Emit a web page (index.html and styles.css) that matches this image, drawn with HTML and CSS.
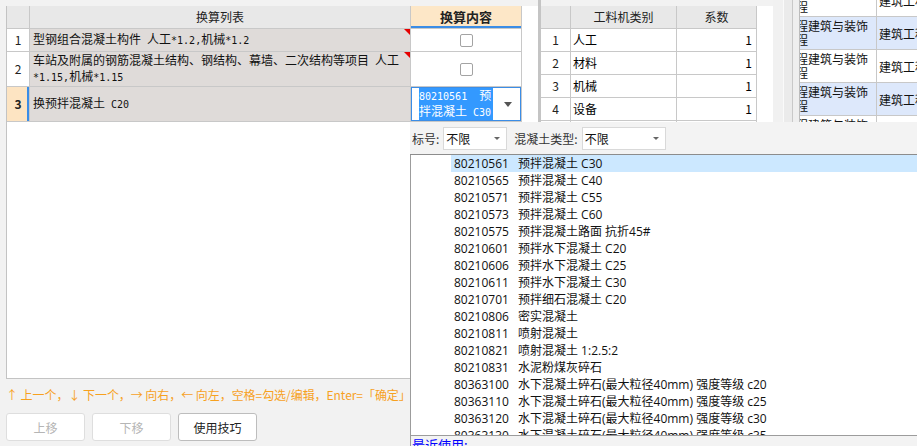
FILE: index.html
```html
<!DOCTYPE html>
<html lang="zh">
<head>
<meta charset="utf-8">
<title>换算</title>
<link rel="stylesheet" href="styles.css">
</head>
<body>
<div class="app">
  <div class="left">
    <div class="panel">
      <div class="grid">
        <div class="cell hd"></div>
        <div class="cell hd">换算列表</div>
        <div class="cell hd hd-act">换算内容</div>

        <div class="cell num">1</div>
        <div class="cell txt"><span>型钢组合混凝土构件<span class="m"> </span>人工<span class="m">*1.2,</span>机械<span class="m">*1.2</span></span><span class="flag"></span></div>
        <div class="cell ctr"><span class="cb"></span></div>

        <div class="cell num">2</div>
        <div class="cell txt"><span>车站及附属的钢筋混凝土结构、钢结构、幕墙、二次结构等项目<span class="m"> </span>人工<br><span class="m">*1.15,</span>机械<span class="m">*1.15</span></span><span class="flag"></span></div>
        <div class="cell ctr"><span class="cb"></span></div>

        <div class="cell num num-act">3</div>
        <div class="cell txt"><span>换预拌混凝土<span class="m"> C20</span></span></div>
        <div class="cell editor"><span class="sel"><span class="m">80210561  </span>预<br>拌混凝土<span class="m"> C30</span></span><span class="caret"></span></div>
      </div>
    </div>
    <div class="hint">↑ 上一个，↓ 下一个，→ 向右，← 向左，空格=勾选/编辑，Enter=「确定」</div>
    <div class="buttons">
      <button class="btn off">上移</button>
      <button class="btn off">下移</button>
      <button class="btn">使用技巧</button>
    </div>
  </div>
  <div class="splitter"></div>
  <div class="mid">
    <div class="panel2">
      <div class="grid2">
        <div class="cell hd"></div>
        <div class="cell hd">工料机类别</div>
        <div class="cell hd">系数</div>
        <div class="cell num">1</div><div class="cell t2">人工</div><div class="cell val">1</div>
        <div class="cell num">2</div><div class="cell t2">材料</div><div class="cell val">1</div>
        <div class="cell num">3</div><div class="cell t2">机械</div><div class="cell val">1</div>
        <div class="cell num">4</div><div class="cell t2">设备</div><div class="cell val">1</div>
        <div class="cell num">5</div><div class="cell t2"></div><div class="cell val"></div>
      </div>
    </div>
  </div>
  <div class="gutter"></div>
  <div class="right">
    <div class="grid3">
      <div class="c3"><div class="wrap">工程建筑与装饰工程</div></div><div class="c3 t3">建筑工程</div>
      <div class="c3 blue"><div class="wrap">工程建筑与装饰工程</div></div><div class="c3 t3 blue">建筑工程</div>
      <div class="c3"><div class="wrap">工程建筑与装饰工程</div></div><div class="c3 t3">建筑工程</div>
      <div class="c3 blue"><div class="wrap">工程建筑与装饰工程</div></div><div class="c3 t3 blue">建筑工程</div>
      <div class="c3"><div class="wrap">工程建筑与装饰工程</div></div><div class="c3 t3">建筑工程</div>
    </div>
  </div>
</div>

<div class="dropdown">
  <div class="filter">
    <span class="lbl">标号:</span>
    <span class="combo"><span>不限</span><span class="arrow"></span></span>
    <span class="lbl lbl2">混凝土类型:</span>
    <span class="combo wide"><span>不限</span><span class="arrow"></span></span>
  </div>
  <div class="list">
    <div class="item on"><span class="code">80210561</span>预拌混凝土 C30</div>
    <div class="item"><span class="code">80210565</span>预拌混凝土 C40</div>
    <div class="item"><span class="code">80210571</span>预拌混凝土 C55</div>
    <div class="item"><span class="code">80210573</span>预拌混凝土 C60</div>
    <div class="item"><span class="code">80210575</span>预拌混凝土路面 抗折45#</div>
    <div class="item"><span class="code">80210601</span>预拌水下混凝土 C20</div>
    <div class="item"><span class="code">80210606</span>预拌水下混凝土 C25</div>
    <div class="item"><span class="code">80210611</span>预拌水下混凝土 C30</div>
    <div class="item"><span class="code">80210701</span>预拌细石混凝土 C20</div>
    <div class="item"><span class="code">80210806</span>密实混凝土</div>
    <div class="item"><span class="code">80210811</span>喷射混凝土</div>
    <div class="item"><span class="code">80210821</span>喷射混凝土 1:2.5:2</div>
    <div class="item"><span class="code">80210831</span>水泥粉煤灰碎石</div>
    <div class="item"><span class="code">80363100</span>水下混凝土碎石(最大粒径40mm) 强度等级 c20</div>
    <div class="item"><span class="code">80363110</span>水下混凝土碎石(最大粒径40mm) 强度等级 c25</div>
    <div class="item"><span class="code">80363120</span>水下混凝土碎石(最大粒径40mm) 强度等级 c30</div>
    <div class="item"><span class="code">80363130</span>水下混凝土碎石(最大粒径40mm) 强度等级 c35</div>
  </div>
  <div class="footer">最近使用:</div>
</div>
</body>
</html>
```
FILE: styles.css
```css
html, body {
  margin: 0;
  padding: 0;
}
body {
  width: 917px;
  height: 446px;
  overflow: hidden;
  position: relative;
  background: #f2f2f2;
  font-family: "Noto Sans CJK SC", "Noto Sans", sans-serif;
  font-size: 12px;
  color: #000;
}

.app {
  display: flex;
  height: 446px;
  padding-left: 6px;
  box-sizing: border-box;
}

/* monospace ascii runs imitating a bitmap song font */
.m {
  font-family: "DejaVu Sans Mono", "Liberation Mono", monospace;
  font-size: 10px;
  white-space: pre;
}

/* left column */
.left {
  width: 532px;
  flex: none;
  display: flex;
  flex-direction: column;
  padding-top: 6px;
  box-sizing: border-box;
}
.panel {
  height: 373px;
  flex: none;
  box-sizing: border-box;
  background: #fff;
  border-left: 1px solid #c3c3c3;
  border-bottom: 1px solid #c3c3c3;
}
.grid {
  display: grid;
  grid-template-columns: 23px 381px 111px;
  grid-template-rows: 23px 23px 35px 35px;
  width: 515px;
}
.cell {
  box-sizing: border-box;
  border-right: 1px solid #c8c8c8;
  border-bottom: 1px solid #c8c8c8;
  display: flex;
  align-items: center;
  position: relative;
  overflow: hidden;
  line-height: 14px;
  white-space: nowrap;
}
.hd {
  background: #e8e8e8;
  justify-content: center;
  color: #222;
}
.hd-act {
  background: #fde7c7;
  font-weight: bold;
  font-size: 13px;
  box-shadow: inset 0 -2px 0 #3b8de6;
}
.num {
  justify-content: center;
  background: #fff;
  color: #222;
}
.num-act {
  background: #fde4c2;
  font-weight: bold;
  box-shadow: inset -2px 0 0 #3b8de6;
}
.txt {
  background: #dfdbd9;
  padding-left: 3px;
  color: #111;
}
.ctr {
  justify-content: center;
}
.cb {
  width: 13px;
  height: 13px;
  box-sizing: border-box;
  border: 1px solid #a3a3a3;
  border-radius: 2px;
  background: #fff;
}
.flag {
  position: absolute;
  top: 0;
  right: 0;
  width: 0;
  height: 0;
  border-top: 6px solid #e60000;
  border-left: 6px solid transparent;
}
.editor {
  justify-content: space-between;
  padding: 0 9px 0 8px;
  box-shadow: inset 0 0 0 1px #3b8de6;
}
.sel {
  display: block;
  width: 74px;
  background: #3399ff;
  color: #fff;
  white-space: pre;
  line-height: 14px;
}
.caret {
  width: 0;
  height: 0;
  border-left: 4px solid transparent;
  border-right: 4px solid transparent;
  border-top: 5px solid #555;
}

.hint {
  margin-top: 7px;
  height: 18px;
  line-height: 18px;
  color: #f7a11f;
  white-space: nowrap;
  letter-spacing: -0.05px;
}
.buttons {
  margin-top: 9px;
  display: flex;
  gap: 7px;
}
.btn {
  width: 79px;
  height: 28px;
  box-sizing: border-box;
  border: 1px solid #d6d6d6;
  border-radius: 3px;
  background: #fff;
  font-family: inherit;
  font-size: 12px;
  color: #222;
  padding: 0;
}
.btn.off {
  color: #b5b5b5;
  border-color: #dedede;
}
.btn:not(.off) {
  border-color: #bdbdbd;
}

.splitter {
  width: 3px;
  flex: none;
  background: #c4c4c4;
}

/* middle table */
.mid {
  width: 232px;
  flex: none;
  padding-top: 6px;
  box-sizing: border-box;
}
.panel2 {
  background: #fff;
  height: 100%;
  overflow: hidden;
}
.grid2 {
  display: grid;
  grid-template-columns: 30px 106px 80px;
  grid-auto-rows: 23px;
  width: 216px;
}
.t2 {
  padding-left: 2px;
}
.val {
  justify-content: flex-end;
  padding-right: 4px;
}

.gutter {
  width: 27px;
  flex: none;
  background: linear-gradient(to right, #f1f1f1 0 10px, #fafafa 10px 11px, #ebebeb 11px 19px, #c9c9c9 19px 20px, #efefef 20px 26px, #bcbcbc 26px 27px);
}

/* right table */
.right {
  flex: 1;
  background: #fff;
  overflow: hidden;
}
.grid3 {
  display: grid;
  grid-template-columns: 77px 140px;
  grid-auto-rows: 33px;
  margin-top: -16px;
}
.c3 {
  box-sizing: border-box;
  border-right: 1px solid #c8c8c8;
  border-bottom: 1px solid #c8c8c8;
  overflow: hidden;
  display: flex;
  align-items: center;
  font-size: 12px;
  color: #111;
}
.c3 .wrap {
  margin-left: -16px;
  width: 86px;
  flex: none;
  line-height: 14px;
}
.t3 {
  padding-left: 2px;
  white-space: nowrap;
}
.blue {
  background: #dde8fb;
}

/* dropdown overlay */
.dropdown {
  position: absolute;
  left: 410px;
  top: 122px;
  width: 507px;
  height: 324px;
  display: flex;
  flex-direction: column;
  background: #f3f3f3;
}
.filter {
  height: 33px;
  flex: none;
  box-sizing: border-box;
  border-bottom: 1px solid #8c8c8c;
  display: flex;
  align-items: center;
  padding-left: 2px;
  color: #333;
}
.lbl {
  margin-right: 4px;
}
.lbl2 {
  margin-left: 7px;
}
.combo {
  width: 64px;
  height: 23px;
  box-sizing: border-box;
  border: 1px solid #d9d9d9;
  background: #fff;
  display: flex;
  align-items: center;
  justify-content: space-between;
  padding: 0 6px 0 2px;
  color: #111;
}
.combo.wide {
  width: 84px;
}
.arrow {
  width: 0;
  height: 0;
  border-left: 3px solid transparent;
  border-right: 3px solid transparent;
  border-top: 3px solid #666;
}
.list {
  height: 281px;
  flex: none;
  box-sizing: border-box;
  background: #fff;
  border-left: 1px solid #9c9c9c;
  border-bottom: 1px solid #9c9c9c;
  overflow: hidden;
  font-family: "Open Sans", "Noto Sans CJK SC", sans-serif;
}
.item {
  height: 17px;
  line-height: 17px;
  margin-left: 40px;
  padding-left: 3px;
  white-space: nowrap;
  color: #111;
}
.item.on {
  background: #cce8ff;
}
.code {
  display: inline-block;
  width: 64px;
}
.footer {
  flex: 1;
  border-left: 1px solid #9c9c9c;
  color: #0000ff;
  font-size: 13px;
  padding-left: 1px;
  line-height: 18px;
}
```
